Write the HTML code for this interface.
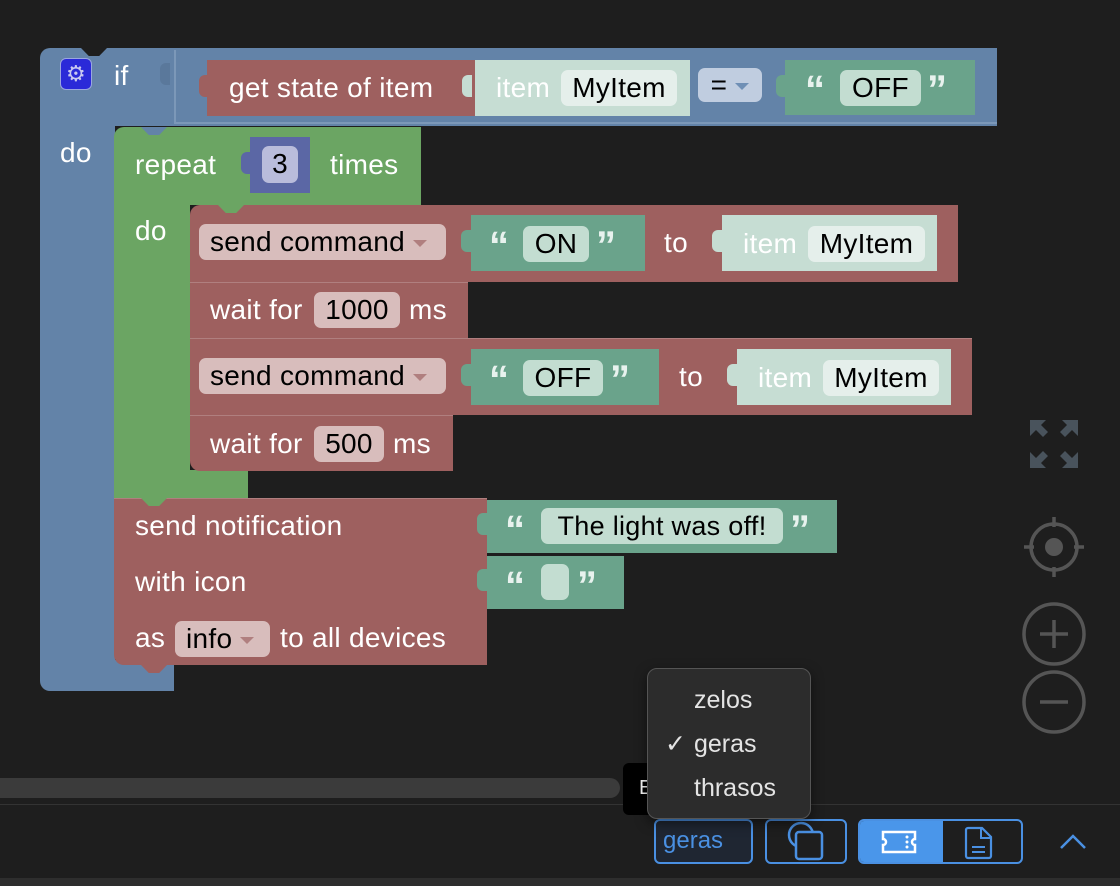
<!DOCTYPE html>
<html><head><meta charset="utf-8"><style>
*{margin:0;padding:0;box-sizing:border-box}
body{width:1120px;height:886px;background:#1e1e1e;position:relative;overflow:hidden;font-family:"Liberation Sans",Arial,sans-serif;font-size:28px;letter-spacing:0.3px;color:#fff}
.a{position:absolute}
.blue{background:#6383a8}
.red{background:#9e605f}
.green{background:#6ba563}
.teal{background:#6aa38b}
.lt{background:#c6ddd3}
.t{position:absolute;white-space:nowrap;line-height:28px}
.f{position:absolute;border-radius:7px;color:#000;line-height:36px;text-align:center;white-space:nowrap}
.rf{background:#d8bdbc}
.tf{background:#c3ddd1}
.mf{background:#e5efeb}
.q{position:absolute;font-family:"Liberation Sans",sans-serif;font-weight:bold;font-size:40px;color:#e8f2ee;line-height:40px;letter-spacing:-2px}
.tab{position:absolute;width:10px;height:22px;border-radius:6px 0 0 6px}
.notch{position:absolute;width:26px;height:8px;clip-path:polygon(0 0,100% 0,70% 100%,30% 100%)}
.arr{display:inline-block;width:0;height:0;border-left:7px solid transparent;border-right:7px solid transparent;border-top:7px solid #b07f7f;vertical-align:middle;margin-left:8px}
</style></head><body>

<!-- IF block -->
<div class="a blue" style="left:40px;top:48px;width:957px;height:78px;border-radius:10px 0 0 0"></div>
<div class="a blue" style="left:40px;top:120px;width:75px;height:548px"></div>
<div class="a blue" style="left:40px;top:660px;width:134px;height:31px;border-radius:0 0 0 10px"></div>
<div class="notch" style="left:81px;top:48px;background:#1e1e1e"></div>
<div class="a" style="left:174px;top:50px;width:823px;height:74px;border-left:2px solid #7c98b8;border-bottom:2px solid #7c98b8"></div>
<div class="a" style="left:60px;top:58px;width:32px;height:32px;background:#2a2ad8;border-radius:6px;border:1px solid #9aa6e0;color:#c9c9f0;font-size:22px;text-align:center;line-height:29px">⚙</div>
<div class="t" style="left:114px;top:62px">if</div>
<div class="t" style="left:60px;top:139px">do</div>
<div class="tab" style="left:160px;top:63px;background:#5a789b"></div>

<!-- get state -->
<div class="a red" style="left:207px;top:60px;width:268px;height:56px"></div>
<div class="tab" style="left:199px;top:75px;background:#9e605f"></div>
<div class="t" style="left:229px;top:74px">get state of item</div>
<div class="a lt" style="left:475px;top:60px;width:215px;height:56px"></div>
<div class="tab" style="left:462px;top:75px;background:#c6ddd3"></div>
<div class="t" style="left:496px;top:74px">item</div>
<div class="f mf" style="left:561px;top:70px;width:116px">MyItem</div>
<div class="f" style="left:698px;top:68px;width:64px;height:34px;line-height:34px;background:#c0cde0">=<span class="arr" style="border-top-color:#6f8fb5"></span></div>
<div class="a teal" style="left:785px;top:60px;width:190px;height:55px"></div>
<div class="tab" style="left:776px;top:75px;background:#6aa38b"></div>
<div class="q" style="left:805px;top:70px">“</div>
<div class="f tf" style="left:840px;top:70px;width:81px">OFF</div>
<div class="q" style="left:927px;top:70px">”</div>

<!-- repeat -->
<div class="a green" style="left:114px;top:127px;width:307px;height:78px;border-radius:10px 0 0 0"></div>
<div class="a green" style="left:114px;top:200px;width:76px;height:280px"></div>
<div class="a green" style="left:114px;top:470px;width:134px;height:28px"></div>
<div class="notch" style="left:141px;top:127px;background:#6383a8"></div>
<div class="t" style="left:135px;top:151px">repeat</div>
<div class="a" style="left:250px;top:137px;width:60px;height:56px;background:#5b67a5"></div>
<div class="tab" style="left:241px;top:152px;background:#5b67a5"></div>
<div class="f" style="left:262px;top:146px;width:36px;height:37px;background:#b9bcdb">3</div>
<div class="t" style="left:330px;top:151px">times</div>
<div class="t" style="left:135px;top:217px">do</div>

<!-- send command 1 -->
<div class="a red" style="left:190px;top:205px;width:768px;height:77px;border-radius:10px 0 0 0"></div>
<div class="notch" style="left:218px;top:205px;background:#6ba563"></div>
<div class="f rf" style="left:199px;top:224px;width:247px;text-align:left;padding-left:11px">send command<span class="arr"></span></div>
<div class="a teal" style="left:471px;top:215px;width:174px;height:56px"></div>
<div class="tab" style="left:461px;top:230px;background:#6aa38b"></div>
<div class="q" style="left:489px;top:226px">“</div>
<div class="f tf" style="left:523px;top:226px;width:66px">ON</div>
<div class="q" style="left:596px;top:226px">”</div>
<div class="t" style="left:664px;top:229px">to</div>
<div class="a lt" style="left:722px;top:215px;width:215px;height:56px"></div>
<div class="tab" style="left:712px;top:230px;background:#c6ddd3"></div>
<div class="t" style="left:743px;top:230px">item</div>
<div class="f mf" style="left:808px;top:226px;width:117px">MyItem</div>

<!-- wait 1000 -->
<div class="a red" style="left:190px;top:282px;width:278px;height:56px;border-top:1px solid #b07f7f"></div>
<div class="t" style="left:210px;top:296px">wait for</div>
<div class="f rf" style="left:314px;top:292px;width:86px">1000</div>
<div class="t" style="left:409px;top:296px">ms</div>

<!-- send command 2 -->
<div class="a red" style="left:190px;top:338px;width:782px;height:77px;border-top:1px solid #b07f7f"></div>
<div class="f rf" style="left:199px;top:358px;width:247px;text-align:left;padding-left:11px">send command<span class="arr"></span></div>
<div class="a teal" style="left:471px;top:349px;width:188px;height:56px"></div>
<div class="tab" style="left:461px;top:364px;background:#6aa38b"></div>
<div class="q" style="left:489px;top:360px">“</div>
<div class="f tf" style="left:523px;top:360px;width:80px">OFF</div>
<div class="q" style="left:610px;top:360px">”</div>
<div class="t" style="left:679px;top:363px">to</div>
<div class="a lt" style="left:737px;top:349px;width:214px;height:56px"></div>
<div class="tab" style="left:727px;top:364px;background:#c6ddd3"></div>
<div class="t" style="left:758px;top:364px">item</div>
<div class="f mf" style="left:823px;top:360px;width:116px">MyItem</div>

<!-- wait 500 -->
<div class="a red" style="left:190px;top:415px;width:263px;height:56px;border-top:1px solid #b07f7f;border-radius:0 0 0 10px"></div>
<div class="t" style="left:210px;top:430px">wait for</div>
<div class="f rf" style="left:314px;top:426px;width:70px">500</div>
<div class="t" style="left:393px;top:430px">ms</div>

<!-- notification -->
<div class="a red" style="left:114px;top:498px;width:373px;height:167px;border-top:1px solid #b07f7f;border-radius:0 0 0 10px"></div>
<div class="notch" style="left:141px;top:498px;background:#6ba563"></div>
<div class="notch" style="left:141px;top:665px;background:#9e605f"></div>
<div class="t" style="left:135px;top:512px">send notification</div>
<div class="t" style="left:135px;top:568px">with icon</div>
<div class="t" style="left:135px;top:624px">as</div>
<div class="f rf" style="left:175px;top:621px;width:95px;text-align:left;padding-left:11px">info<span class="arr"></span></div>
<div class="t" style="left:280px;top:624px">to all devices</div>
<div class="a teal" style="left:487px;top:500px;width:350px;height:53px"></div>
<div class="tab" style="left:477px;top:513px;background:#6aa38b"></div>
<div class="q" style="left:505px;top:510px">“</div>
<div class="f tf" style="left:541px;top:508px;width:242px;font-size:27px">The light was off!</div>
<div class="q" style="left:790px;top:510px">”</div>
<div class="a teal" style="left:487px;top:556px;width:137px;height:53px"></div>
<div class="tab" style="left:477px;top:569px;background:#6aa38b"></div>
<div class="q" style="left:505px;top:566px">“</div>
<div class="f tf" style="left:541px;top:564px;width:28px;height:36px"></div>
<div class="q" style="left:577px;top:566px">”</div>

<!-- right controls -->
<svg class="a" style="left:1020px;top:410px" width="70" height="330" viewBox="0 0 70 330">
<g fill="#49535c">
<path d="M10 10h16l-5 5 7 7-5 5-7-7-6 6z"/>
<path d="M58 10h-16l5 5-7 7 5 5 7-7 6 6z"/>
<path d="M10 58h16l-5-5 7-7-5-5-7 7-6-6z"/>
<path d="M58 58h-16l5-5-7-7 5-5 7 7 6-6z"/>
</g>
<g stroke="#555" stroke-width="3.5" fill="none">
<circle cx="34" cy="137" r="23"/>
<path d="M34 107v10M34 157v10M4 137h10M54 137h10"/>
<circle cx="34" cy="224" r="30"/><path d="M20 224h28M34 210v28"/>
<circle cx="34" cy="292" r="30"/><path d="M20 292h28"/>
</g>
<circle cx="34" cy="137" r="9" fill="#555"/>
</svg>

<!-- bottom area -->
<div class="a" style="left:0;top:778px;width:620px;height:20px;background:#3b3b3b;border-radius:0 10px 10px 0"></div>
<div class="a" style="left:0;top:804px;width:1120px;height:1px;background:#333"></div>
<div class="a" style="left:0;top:878px;width:1120px;height:8px;background:#2e2e2e"></div>
<div class="a" style="left:623px;top:763px;width:40px;height:52px;background:#000;border-radius:6px;color:#fff;font-size:20px;padding:14px 0 0 16px">E</div>

<div class="a" style="left:654px;top:819px;width:99px;height:45px;border:2px solid #4a90e2;border-radius:6px;background:#1f2632;color:#4a90e2;font-size:24px;line-height:40px;padding-left:7px;letter-spacing:0">geras</div>
<div class="a" style="left:765px;top:819px;width:82px;height:45px;border:2px solid #4a90e2;border-radius:6px"></div>
<svg class="a" style="left:785px;top:820px" width="45" height="42"><g fill="none" stroke="#4a90e2" stroke-width="2.5"><circle cx="16" cy="15" r="12"/><rect x="11" y="12" width="26" height="27" rx="3" fill="#1e1e1e"/></g></svg>
<div class="a" style="left:858px;top:819px;width:165px;height:45px;border:2px solid #4a90e2;border-radius:6px;overflow:hidden"><div style="width:83px;height:45px;background:#4a96ea"></div></div>
<svg class="a" style="left:878px;top:826px" width="130" height="34"><path d="M5 6h32v7a3 3 0 0 0 0 6v7H5v-7a3 3 0 0 0 0-6z" fill="none" stroke="#fff" stroke-width="2.5"/><circle cx="29" cy="11" r="1.5" fill="#fff"/><circle cx="29" cy="16" r="1.5" fill="#fff"/><circle cx="29" cy="21" r="1.5" fill="#fff"/>
<path d="M90 2h14l9 9v19a2 2 0 0 1-2 2H90a2 2 0 0 1-2-2V4a2 2 0 0 1 2-2z" fill="none" stroke="#4a90e2" stroke-width="2.2"/><path d="M103 2v10h10M94 21h13M94 26h13" fill="none" stroke="#4a90e2" stroke-width="2"/></svg>
<svg class="a" style="left:1058px;top:830px" width="30" height="22"><path d="M3 18l12-12 12 12" fill="none" stroke="#4a90e2" stroke-width="2.5"/></svg>

<!-- dropdown menu -->
<div class="a" style="left:647px;top:668px;width:164px;height:151px;background:#2c2c2c;border:1px solid #555;border-radius:10px;box-shadow:0 4px 12px rgba(0,0,0,.5)"></div>
<div class="t" style="left:694px;top:686px;color:#e4e4e4;font-size:25px;letter-spacing:0">zelos</div>
<div class="t" style="left:665px;top:730px;color:#e4e4e4;font-size:25px">✓</div>
<div class="t" style="left:694px;top:730px;color:#e4e4e4;font-size:25px;letter-spacing:0">geras</div>
<div class="t" style="left:694px;top:774px;color:#e4e4e4;font-size:25px;letter-spacing:0">thrasos</div>
</body></html>
